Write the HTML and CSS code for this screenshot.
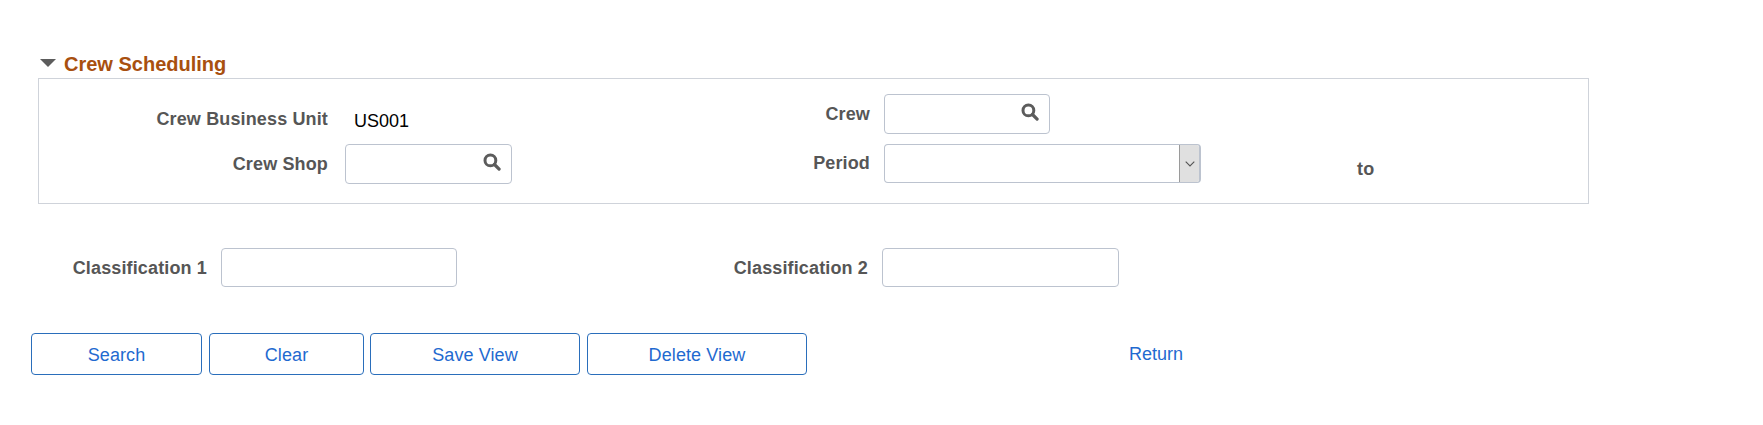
FILE: index.html
```html
<!DOCTYPE html>
<html lang="en">
<head>
<meta charset="utf-8">
<title>Crew Scheduling</title>
<link rel="stylesheet" href="styles.css">
</head>
<body>
<main class="page">
  <h2 class="section-title"><span class="caret"></span>Crew Scheduling</h2>
  <section class="group">
    <div class="col col-left">
      <div class="row row-unit">
        <span class="label label-left">Crew Business Unit</span>
        <span class="value">US001</span>
      </div>
      <div class="row row-shop">
        <span class="label label-left">Crew Shop</span>
        <div class="input search-input">
          <svg class="mag" viewBox="0 0 18 18"><circle cx="7.4" cy="7.4" r="5.4" fill="none" stroke="#5c5c5c" stroke-width="3"/><path d="M11.5 11.5l4.6 4.6" stroke="#5c5c5c" stroke-width="3.2" stroke-linecap="round"/></svg>
        </div>
      </div>
    </div>
    <div class="col col-mid">
      <div class="row row-crew">
        <span class="label label-mid">Crew</span>
        <div class="input search-input search-crew">
          <svg class="mag" viewBox="0 0 18 18"><circle cx="7.4" cy="7.4" r="5.4" fill="none" stroke="#5c5c5c" stroke-width="3"/><path d="M11.5 11.5l4.6 4.6" stroke="#5c5c5c" stroke-width="3.2" stroke-linecap="round"/></svg>
        </div>
      </div>
      <div class="row row-period">
        <span class="label label-mid">Period</span>
        <div class="input select-input">
          <span class="select-btn"><svg class="chev" viewBox="0 0 10 6"><path d="M.7.7L5 5l4.3-4.3" fill="none" stroke="#555" stroke-width="1.1"/></svg></span>
        </div>
        <span class="label to">to</span>
      </div>
    </div>
  </section>
  <section class="class-row">
    <div class="class-item item-1">
      <span class="label">Classification 1</span>
      <div class="input class-input"></div>
    </div>
    <div class="class-item item-2">
      <span class="label">Classification 2</span>
      <div class="input class-input"></div>
    </div>
  </section>
  <section class="actions">
    <button class="btn btn-search">Search</button>
    <button class="btn btn-clear">Clear</button>
    <button class="btn btn-save">Save View</button>
    <button class="btn btn-delete">Delete View</button>
    <a class="return" href="#">Return</a>
  </section>
</main>
</body>
</html>
```
FILE: styles.css
```css
* { box-sizing: border-box; }
html, body { margin: 0; padding: 0; background: #fff; }
body { font-family: "Liberation Sans", Arial, sans-serif; font-size: 18px; color: #000; }
.page { padding: 52px 0 0 31px; height: 425px; overflow: hidden; }
.section-title { margin: 0 0 0 9px; height: 26px; padding-bottom: 2px; display: flex; align-items: center; font-size: 20px; font-weight: bold; color: #a8500f; line-height: 24px; }
.caret { flex: none; width: 0; height: 0; border-left: 8px solid transparent; border-right: 8px solid transparent; border-top: 8px solid #5c5c5c; margin: -2px 8px 0 0; }
.group { margin-left: 7px; width: 1551px; height: 126px; border: 1px solid #cfd3da; display: flex; }
.col { display: flex; flex-direction: column; }
.col-left { flex: none; width: 475px; }
.col-mid { flex: none; width: 1000px; }
.row { display: flex; align-items: center; }
.label { flex: none; font-weight: bold; color: #565656; font-size: 18px; letter-spacing: 0.14px; white-space: nowrap; }
.label-left { width: 289px; text-align: right; }
.label-mid { width: 356px; text-align: right; }
.row-unit { height: 40px; margin-top: 20px; }
.value { margin-left: 26px; position: relative; top: 2px; }
.row-shop { height: 40px; margin-top: 5px; }
.row-shop .input { margin-left: 17px; }
.row-crew { margin-top: 15px; height: 40px; }
.row-crew .input { margin-left: 14px; }
.row-period { margin-top: 10px; height: 39px; }
.row-period .input { margin-left: 14px; }
.input { flex: none; height: 40px; border: 1px solid #bcc3cf; border-radius: 4px; background: #fff; }
.search-input { width: 167px; display: flex; align-items: center; justify-content: flex-end; padding-right: 10px; }
.search-crew { width: 166px; }
.mag { width: 18px; height: 18px; display: block; margin-top: -4px; }
.select-input { width: 317px; height: 39px; display: flex; justify-content: flex-end; overflow: hidden; border-right-width: 2px; }
.select-btn { width: 20px; background: #e0e0e0; border-left: 1px solid #9a9a9a; display: flex; align-items: center; justify-content: center; }
.chev { width: 10px; height: 6px; }
.to { margin-left: 156px; position: relative; top: 6px; }
.class-row { display: flex; margin-top: 44px; height: 40px; }
.class-item { display: flex; align-items: flex-start; }
.item-1 { width: 426px; justify-content: flex-end; }
.item-2 { margin-left: 236px; width: 426px; justify-content: flex-end; }
.class-item .label { margin: 10px 14px 0 0; }
.class-input { width: 236px; height: 39px; }
.item-2 .class-input { width: 237px; }
.actions { display: flex; align-items: center; margin-top: 45px; height: 42px; }
.btn { height: 42px; margin: 0 7px 0 0; padding: 2px 0 0; background: #fff; border: 1px solid #2a6ebb; border-radius: 4px; color: #1f6ad0; font: 18px "Liberation Sans", Arial, sans-serif; letter-spacing: 0.1px; }
.btn-search { width: 171px; }
.btn-clear { width: 155px; margin-right: 6px; }
.btn-save { width: 210px; }
.btn-delete { width: 220px; }
.return { margin-left: 315px; color: #1f6ad0; text-decoration: none; font-size: 18px; }
```
